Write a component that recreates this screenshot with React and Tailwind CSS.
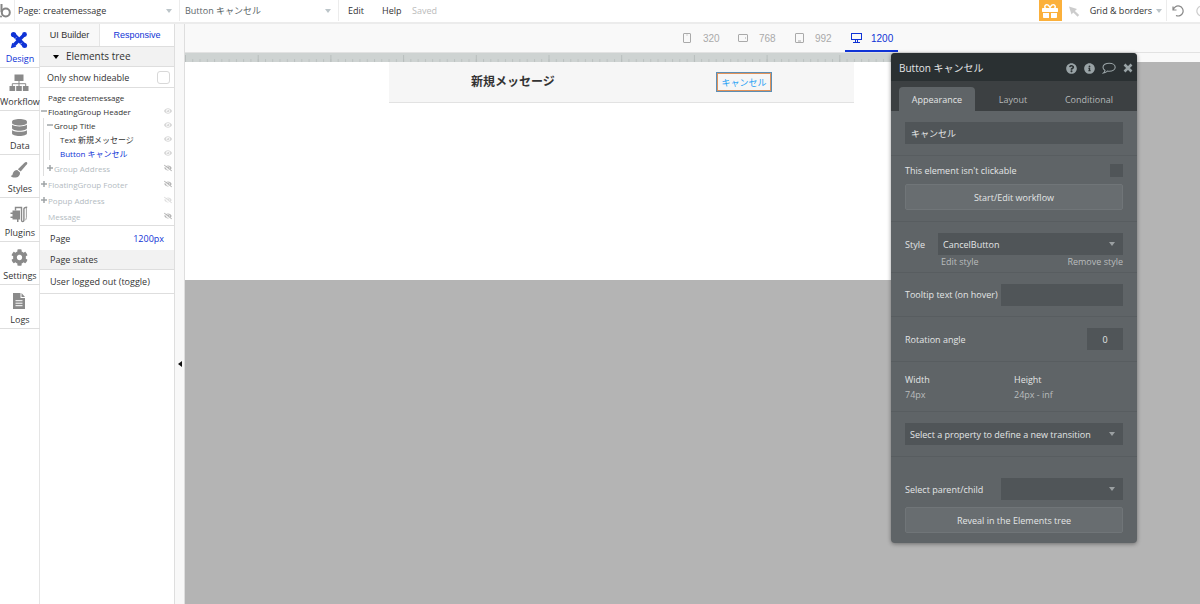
import React, { useState } from 'react';
import clsx from 'clsx';
import { FaCog, FaDatabase, FaEye, FaEyeSlash, FaGift, FaInfoCircle, FaQuestionCircle } from 'react-icons/fa';

const DesignIcon = () => (
  <svg viewBox="0 0 18 18" className="h-[18px] w-[18px]" fill="none" stroke="currentColor">
    <path d="M3.500 3.500 14.500 14.500" strokeWidth="4" />
    <path d="M4 14 14 4" strokeWidth="3.400" />
    <g fill="currentColor" stroke="none">
      <circle cx="3.500" cy="3.500" r="2.600" />
      <circle cx="14.500" cy="3.500" r="2.400" />
      <circle cx="14.600" cy="14.600" r="2.500" />
      <path d="m.8 17.200 1.400-5.400 4 4Z" />
    </g>
    <path d="m5.200 7.600 1.200-1.200M10.600 13l1.200-1.200" stroke="#fff" strokeWidth="0.700" />
  </svg>
);

const WorkflowIcon = () => (
  <svg viewBox="0 0 20 18" className="h-[18px] w-[20px]" fill="currentColor">
    <rect x="5.500" y="0.500" width="9" height="6.500" />
    <rect x="0.500" y="12" width="5.600" height="5" />
    <rect x="7.200" y="12" width="5.600" height="5" />
    <rect x="13.900" y="12" width="5.600" height="5" />
    <path d="M10 7v5.500M3.300 12.500V9.700h13.400v2.800" fill="none" stroke="currentColor" strokeWidth="1" />
  </svg>
);

const BrushIcon = () => (
  <svg viewBox="0 0 18 18" className="h-[18px] w-[18px]" fill="currentColor">
    <path d="M16.800 1.200c.7.600.6 1.300.1 2L10.700 10.600 7.900 8.200 14.800 1.500c.7-.6 1.300-.8 2-.3Z" />
    <path d="M7.200 8.900 10 11.400c.2 3.300-2.200 5.200-5 5.200-2 0-3.400-.6-4.200-1.700 1.400-.1 1.700-.9 2-2.300.4-2.200 2.200-3.700 4.400-3.700Z" />
  </svg>
);

const PluginsIcon = () => (
  <svg viewBox="0 0 18 18" className="h-[18px] w-[18px]" fill="currentColor">
    <path d="M2.500 5.500H10v9H8.500V17H7v-2.500H2.500V13H.5v-1.400h2V9H.5V7.600h2Z" />
    <path
      d="M5.500 5.500V2.500h6V15q0 1.600 1.200 1.600T13.900 15V4q0-1.800 3.300-1.800"
      fill="none"
      stroke="currentColor"
      strokeWidth="1.400"
    />
    <path d="M14.900 15.500q1.500-1 1.500-3V2.500" fill="none" stroke="currentColor" strokeWidth="0.800" />
  </svg>
);

const LogsIcon = () => (
  <svg viewBox="0 0 14 18" className="h-[18px] w-[14px]" fill="currentColor">
    <path d="M1 1h7.500v5H13v11H1Z" />
    <path d="m9.500 1 3.500 4H9.500Z" />
    <path d="M3.500 8.700h7M3.500 11.200h7M3.500 13.700h7" stroke="#fff" strokeWidth="1" />
  </svg>
);

const PointerIcon = () => (
  <svg viewBox="0 0 12 12" className="h-3 w-3" fill="currentColor">
    <path d="M1 1.500 9 4 6.900 5.900l4.300 4.200-1.600 1.600-4.300-4.300L3.500 9.500Z" />
  </svg>
);

const CommentIcon = () => (
  <svg viewBox="0 0 14 12" className="h-3 w-[14px]" fill="none" stroke="currentColor" strokeWidth="1.100">
    <path d="M7.200 1.200c3.400 0 6 1.700 6 4s-2.600 4-6 4q-.9 0-1.800-.2Q4 10.600 1.600 10.900q1.200-1 1.400-2.500C1.800 7.600 1 6.500 1 5.200c0-2.300 2.800-4 6.200-4Z" />
  </svg>
);

const CloseIcon = () => (
  <svg viewBox="0 0 10 10" className="h-2.5 w-2.5" fill="none" stroke="currentColor" strokeWidth="2.600">
    <path d="m1.500 1.500 7 7M8.500 1.500l-7 7" />
  </svg>
);

const Caret = ({ className }) => (
  <svg viewBox="0 0 6 4" className={clsx('h-1 w-1.5 shrink-0', className)} fill="currentColor">
    <path d="M0 0h6L3 4Z" />
  </svg>
);

const DeviceIcon = ({ type }) => (
  <svg viewBox="0 0 12 12" className="h-3 w-3 shrink-0" fill="none" stroke="currentColor">
    {type === 'phone' && (
      <>
        <rect x="1.500" y="1.500" width="7" height="9" rx="0.500" />
        <path d="M4.500 3h1" />
      </>
    )}
    {type === 'landscape' && (
      <>
        <rect x="0.500" y="2.500" width="9" height="7" rx="0.500" />
        <path d="M7.500 5.500v1" />
      </>
    )}
    {type === 'tablet' && (
      <>
        <rect x="1.500" y="1.500" width="8" height="9" rx="0.500" />
        <path d="M4 9h3" />
      </>
    )}
    {type === 'desktop' && (
      <>
        <rect x="1.500" y="1.500" width="10" height="6" />
        <path d="M5.500 8v2M7.500 8v2M3 10.500h7" />
      </>
    )}
  </svg>
);

const NAV = [
  { label: 'Design', icon: <DesignIcon />, active: true },
  { label: 'Workflow', icon: <WorkflowIcon /> },
  { label: 'Data', icon: <FaDatabase size={17} /> },
  { label: 'Styles', icon: <BrushIcon /> },
  { label: 'Plugins', icon: <PluginsIcon /> },
  { label: 'Settings', icon: <FaCog size={17} /> },
  { label: 'Logs', icon: <LogsIcon /> },
];

const DEVICES = [
  { type: 'phone', width: 320 },
  { type: 'landscape', width: 768 },
  { type: 'tablet', width: 992 },
  { type: 'desktop', width: 1200 },
];

const TopBar = () => (
  <header className="flex h-6 shrink-0 border-b-2 border-[#ececec] bg-white pb-px text-[#333]">
    <a href="#home" aria-label="Home" className="flex w-[15px] items-center border-r border-[#ececec]">
      <svg viewBox="0 0 12 16" className="h-4 w-3" fill="none" stroke="#858585" strokeWidth="2">
        <path d="M1.500 1v8" />
        <circle cx="5.800" cy="9.500" r="4" />
        <circle cx="1" cy="13.400" r="1" fill="#858585" stroke="none" />
      </svg>
    </a>
    <TopSelect label="Page" value="Page: createmessage" className="w-[165px] pl-[3px]" />
    <TopSelect label="Element" value="Button キャンセル" className="w-[159px] pl-[5px] text-[#5c6669]" />
    <nav className="flex items-center pl-[9px] font-medium">
      <button type="button" className="w-[34px] text-left">Edit</button>
      <button type="button" className="w-[30px] text-left">Help</button>
      <span className="font-normal text-[#bbb]">Saved</span>
    </nav>
    <div className="ml-auto flex items-center">
      <button type="button" aria-label="Gifts" className="flex h-full w-[23px] items-center justify-center bg-[#fbb03b] text-white">
        <FaGift size={16} />
      </button>
      <button type="button" aria-label="Pointer" className="ml-1.5 text-[#ccc]">
        <PointerIcon />
      </button>
      <button type="button" className="ml-[10px] flex h-full items-center gap-1 border-r border-[#ececec] pr-1 font-medium">
        Grid &amp; borders
        <Caret className="text-[#bcc5c9]" />
      </button>
      <button type="button" aria-label="Undo" className="ml-[5px] text-[#888]">
        <svg viewBox="0 0 12 12" className="h-3 w-3" fill="none" stroke="currentColor" strokeWidth="1.200">
          <path d="M1 1.500v3.500h3.500M1.200 5A5 5 0 1 1 4 10.500" />
        </svg>
      </button>
      <button type="button" aria-label="Redo" className="ml-3 w-1 overflow-hidden text-[#ccc]">
        <svg viewBox="0 0 12 12" className="h-3 w-3" fill="none" stroke="currentColor" strokeWidth="1.200">
          <path d="M11 1.500v3.500H7.500M10.800 5A5 5 0 1 0 8 10.500" />
        </svg>
      </button>
    </div>
  </header>
);

const TopSelect = ({ label, value, className }) => (
  <div className={clsx('flex items-center border-r border-[#ececec] pr-[7px]', className)}>
    <select aria-label={label} className="min-w-0 flex-1 appearance-none outline-none">
      <option>{value}</option>
    </select>
    <Caret className="text-[#bcc5c9]" />
  </div>
);

const SideNav = () => (
  <nav className="w-10 shrink-0 border-r border-[#e5e5e5] bg-white">
    <div className="grid h-[305px] grid-rows-7">
      {NAV.map(({ label, icon, active }) => (
        <a
          key={label}
          href={`#${label.toLowerCase()}`}
          className={clsx(
            'flex flex-col items-center justify-end gap-1 border-b border-[#dedede] pr-1 pb-0.5 leading-3',
            active ? 'text-[#0f33d6]' : 'text-[#333]'
          )}
        >
          <span className={clsx('pr-px', !active && 'text-[#8a8a8a]')}>{icon}</span>
          {label}
        </a>
      ))}
    </div>
  </nav>
);

const TreeItem = ({ label, toggle, eye = 'shown', selected, dim, children }) => (
  <li>
    <div
      className={clsx(
        'flex items-center gap-px text-[8px]',
        dim ? 'h-4 text-[#b3bbbf]' : 'h-[14px]',
        selected && 'text-[#0f33d6]'
      )}
    >
      <svg viewBox="0 0 6 6" className="h-1.5 w-1.5 shrink-0" stroke="#9a9fa2" strokeWidth="1.400">
        {toggle && <path d="M0 3h6" />}
        {toggle === 'plus' && <path d="M3 0v6" />}
      </svg>
      <span className="flex-1 whitespace-nowrap">{label}</span>
      {eye === 'shown' && <FaEye size={8} className="text-[#d8d8d8]" />}
      {eye === 'faint' && <FaEyeSlash size={8} className="text-[#dedede]" />}
      {eye === 'hidden' && <FaEyeSlash size={8} className="text-[#b5b5b5]" />}
    </div>
    {children && <ul className="ml-0.5 border-l border-[#dedede] pl-[3px]">{children}</ul>}
  </li>
);

const Sidebar = () => (
  <aside className="w-[135px] shrink-0 border-r border-[#dedede] bg-white text-[#333]">
    <div className="grid h-[23px] grid-cols-[60px_1fr] border-b border-[#dedede] font-['Liberation_Sans',sans-serif]">
      <button type="button" className="border-r border-[#e5e5e5] bg-[#f8f8f8]">UI Builder</button>
      <button type="button" className="text-[#0f33d6]">Responsive</button>
    </div>
    <button type="button" className="flex h-5 w-full items-center gap-[7px] border-b border-[#dedede] bg-[#f2f2f2] pl-[13px] text-[10px]">
      <Caret className="text-black" />
      Elements tree
    </button>
    <label className="flex h-[21px] items-center justify-between border-b border-[#dedede] pr-1 pl-[7px]">
      Only show hideable
      <input type="checkbox" className="h-[13px] w-[13px] appearance-none rounded-[3px] border border-[#d8d8d8] bg-white" />
    </label>
    <ul className="border-b border-[#dedede] pt-0.5 pr-0.5 pb-px pl-px">
      <TreeItem label="Page createmessage" eye="none" />
      <TreeItem label="FloatingGroup Header" toggle="minus">
        <TreeItem label="Group Title" toggle="minus">
          <TreeItem label="Text 新規メッセージ" />
          <TreeItem label="Button キャンセル" selected />
        </TreeItem>
        <TreeItem label="Group Address" toggle="plus" eye="hidden" dim />
      </TreeItem>
      <TreeItem label="FloatingGroup Footer" toggle="plus" eye="hidden" dim />
      <TreeItem label="Popup Address" toggle="plus" eye="faint" dim />
      <TreeItem label="Message" eye="hidden" dim />
    </ul>
    <div className="flex h-6 items-center justify-between px-[10px]">
      <span>Page</span>
      <span className="text-[#0f33d6]">1200px</span>
    </div>
    <div className="flex h-5 items-center border-b border-[#dedede] bg-[#f2f2f2] pl-[10px]">Page states</div>
    <div className="flex h-6 items-center border-b border-[#dedede] pl-[10px]">User logged out (toggle)</div>
  </aside>
);

const Ruler = () => (
  <svg className="block h-[9px] w-full" aria-hidden="true">
    <defs>
      <pattern id="minor" width="7.27" height="9" patternUnits="userSpaceOnUse">
        <path d="M.5 6v3" stroke="#bcc2c1" strokeWidth="1" />
      </pattern>
      <pattern id="major" width="72.7" height="9" patternUnits="userSpaceOnUse">
        <path d="M.5 2v7" stroke="#b8bebd" strokeWidth="1" />
      </pattern>
    </defs>
    <rect width="100%" height="9" fill="#ced3d2" />
    <rect width="100%" height="9" fill="url(#minor)" />
    <rect width="100%" height="9" fill="url(#major)" />
  </svg>
);

const Canvas = () => {
  const [current, setCurrent] = useState(1200);

  return (
    <main className="flex min-w-0 flex-1 flex-col border-l border-[#dedede] bg-[#b4b4b4]">
      <div className="h-[38px] shrink-0 bg-[#f9f9f9]">
        <div className="flex h-[29px] border-b border-[#e2e2e2] pl-[492px] font-['Liberation_Sans',sans-serif] text-[10px]">
          {DEVICES.map(({ type, width }) => (
            <button
              key={width}
              type="button"
              onClick={() => setCurrent(width)}
              className={clsx(
                'flex items-center gap-[9px] border-b-2 pt-0.5 pl-[5px]',
                width === current ? 'w-[53px] border-[#0f33d6] text-[#0f33d6]' : 'w-14 border-transparent text-[#aaa]'
              )}
            >
              <DeviceIcon type={type} />
              {width}
            </button>
          ))}
        </div>
        <div className="w-[86%]">
          <Ruler />
        </div>
      </div>
      <div className="h-[218px] w-[86%] bg-white">
        <div className="mx-auto flex h-[41px] w-[465px] items-center justify-between border-b border-[#e2e2e2] bg-[#f6f6f6] pr-[82px] pl-[82px]">
          <h1 className="text-xs font-bold text-[#333]">新規メッセージ</h1>
          <button type="button" className="h-5 w-14 border border-[#5d8fb5] bg-[#f6f6f6] text-[#1ea0f5] ring-1 ring-[#e0925a] ring-inset">
            キャンセル
          </button>
        </div>
      </div>
    </main>
  );
};

const Section = ({ className, children }) => (
  <section className={clsx('border-b border-[#585d60] px-[14px]', className)}>{children}</section>
);

const PanelSelect = ({ id, label, value, className }) => (
  <div className={clsx('flex h-[22px] items-center bg-[#505558] pr-2 pl-[5px]', className)}>
    <select id={id} aria-label={label} className="min-w-0 flex-1 appearance-none outline-none">
      <option>{value}</option>
    </select>
    <Caret className="text-[#9ba0a2]" />
  </div>
);

const PropertyEditor = () => {
  const [tab, setTab] = useState('Appearance');

  return (
    <div className="absolute top-[53px] right-[63px] w-[246px] overflow-hidden rounded bg-[#5f6467] text-[#e3e5e6] shadow-[0_1px_4px_rgba(0,0,0,0.4)]">
      <div className="flex h-7 items-center gap-[7px] bg-[#2a3032] pt-0.5 pr-1 pl-2 text-[#99a3a6]">
        <h2 className="mr-auto text-[10px] text-[#e3e5e6]">Button キャンセル</h2>
        <button type="button" aria-label="Help"><FaQuestionCircle size={11} /></button>
        <button type="button" aria-label="Info"><FaInfoCircle size={11} /></button>
        <button type="button" aria-label="Comment"><CommentIcon /></button>
        <button type="button" aria-label="Close"><CloseIcon /></button>
      </div>
      <div className="flex h-[30px] items-end bg-[#3c4042] px-2">
        {['Appearance', 'Layout', 'Conditional'].map((name) => (
          <button
            key={name}
            type="button"
            onClick={() => setTab(name)}
            className={clsx('h-6 w-[76px] rounded-t', name === tab ? 'bg-[#5f6467]' : 'text-[#b5b8b9]')}
          >
            {name}
          </button>
        ))}
      </div>
      <Section className="h-[45px] pt-[11px]">
        <input aria-label="Label" defaultValue="キャンセル" className="h-[22px] w-full bg-[#505558] px-[6px] outline-none" />
      </Section>
      <Section className="h-[66px] pt-2">
        <label className="mb-[7px] flex h-[13px] items-center justify-between">
          This element isn't clickable
          <input type="checkbox" className="h-[13px] w-[13px] appearance-none bg-[#505558]" />
        </label>
        <button type="button" className="h-[26px] w-full rounded-xs border border-[#707578] bg-[#686d70]">
          Start/Edit workflow
        </button>
      </Section>
      <Section className="h-[51px] pt-[11px]">
        <div className="flex items-center">
          <label htmlFor="style" className="w-[33px]">Style</label>
          <PanelSelect id="style" value="CancelButton" className="flex-1" />
        </div>
        <div className="flex justify-between pl-9 leading-[14px] text-[#b9bcbd]">
          <a href="#edit-style">Edit style</a>
          <a href="#remove-style">Remove style</a>
        </div>
      </Section>
      <Section className="flex h-11 items-center justify-between">
        <label htmlFor="tooltip">Tooltip text (on hover)</label>
        <input id="tooltip" className="h-[22px] w-[122px] bg-[#505558] px-[5px] outline-none" />
      </Section>
      <Section className="flex h-[45px] items-center justify-between">
        <label htmlFor="rotation">Rotation angle</label>
        <input id="rotation" defaultValue="0" className="h-[22px] w-9 bg-[#505558] text-center outline-none" />
      </Section>
      <Section className="grid h-[50px] grid-cols-2 content-center">
        <div>
          <div>Width</div>
          <div className="text-[#b9bcbd]">74px</div>
        </div>
        <div>
          <div>Height</div>
          <div className="text-[#b9bcbd]">24px - inf</div>
        </div>
      </Section>
      <Section className="h-[45px] pt-[11px]">
        <PanelSelect label="Transition" value="Select a property to define a new transition" />
      </Section>
      <div className="px-[14px] pt-[21px] pb-[10px]">
        <div className="mb-[7px] flex items-center justify-between">
          <label htmlFor="relative">Select parent/child</label>
          <PanelSelect id="relative" value="" className="w-[122px]" />
        </div>
        <button type="button" className="h-[26px] w-full rounded-xs border border-[#707578] bg-[#686d70]">
          Reveal in the Elements tree
        </button>
      </div>
    </div>
  );
};

const App = () => (
  <div className="relative flex h-screen flex-col overflow-hidden bg-white font-['Open_Sans','Noto_Sans_CJK_JP',sans-serif] text-[9px] leading-[15px]">
    <TopBar />
    <div className="flex min-h-0 flex-1">
      <SideNav />
      <Sidebar />
      <div className="flex w-[9px] shrink-0 bg-[#f8f8f8] pt-[336px]">
        <button type="button" aria-label="Collapse sidebar" className="h-2 pl-[3px]">
          <svg viewBox="0 0 4 6" className="h-1.5 w-1" fill="#111">
            <path d="M4 0v6L0 3Z" />
          </svg>
        </button>
      </div>
      <Canvas />
    </div>
    <PropertyEditor />
  </div>
);

export default App;
